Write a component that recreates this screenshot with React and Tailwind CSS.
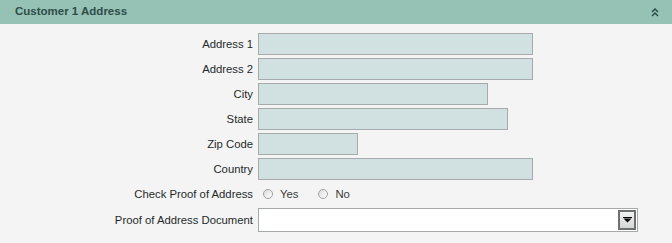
import React from 'react';

const FONT = { fontFamily: '"Liberation Sans", Arial, sans-serif' };

const fields = [
  { label: 'Address 1', w: 'w-[275px]' },
  { label: 'Address 2', w: 'w-[275px]' },
  { label: 'City', w: 'w-[230px]' },
  { label: 'State', w: 'w-[250px]' },
  { label: 'Zip Code', w: 'w-[100px]' },
  { label: 'Country', w: 'w-[275px]' },
];

function Radio({ label }) {
  return (
    <label className="flex items-center gap-[7px] text-[#3a3a3a]">
      <span className="w-[10px] h-[10px] rounded-full border border-[#a0a0a0] bg-gradient-to-br from-[#dcdcdc] to-[#ffffff]" />
      {label}
    </label>
  );
}

export default function App() {
  return (
    <div className="w-[672px] h-[243px] bg-[#f4f4f4] text-[11.3px] text-[#1f2b2b]" style={FONT}>
      {/* Header */}
      <div className="h-[24px] bg-[#96c2b6] flex items-center justify-between pl-[15px] pr-[13px]">
        <span className="font-bold text-[#2e4d48] text-[11.5px]">Customer 1 Address</span>
        <svg width="8" height="9" viewBox="0 0 8 9" fill="none" stroke="#2e4d48" strokeWidth="1.5">
          <path d="M1 4 L4 1 L7 4" />
          <path d="M1 8 L4 5 L7 8" />
        </svg>
      </div>

      <div className="grid grid-cols-[253px_1fr] gap-x-[5px] gap-y-[3px] pt-[9px]">
        {fields.map(f => (
          <React.Fragment key={f.label}>
            <div className="flex items-center justify-end h-[22px]">{f.label}</div>
            <div className={`h-[22px] ${f.w} bg-[#d1e0e0] border border-[#a7aaab]`} />
          </React.Fragment>
        ))}

        <div className="flex items-center justify-end h-[22px]">Check Proof of Address</div>
        <div className="flex items-center gap-[20px] pl-[5px] h-[22px]">
          <Radio label="Yes" />
          <Radio label="No" />
        </div>

        <div className="flex items-center justify-end h-[24px]">Proof of Address Document</div>
        <div className="h-[24px] w-[380px] bg-white border border-[#a7aaab] flex items-center justify-end pr-[1px]">
          <div className="w-[18px] h-[20px] border-2 border-[#6f6f6f] bg-gradient-to-b from-[#f2f2f2] to-[#d6d6d6] flex items-center justify-center">
            <svg width="9" height="6" viewBox="0 0 9 6">
              <rect x="0" y="0" width="9" height="1" fill="#000" />
              <path d="M0.5 1.5 L8.5 1.5 L4.5 5.5 Z" fill="#000" />
            </svg>
          </div>
        </div>
      </div>
    </div>
  );
}
